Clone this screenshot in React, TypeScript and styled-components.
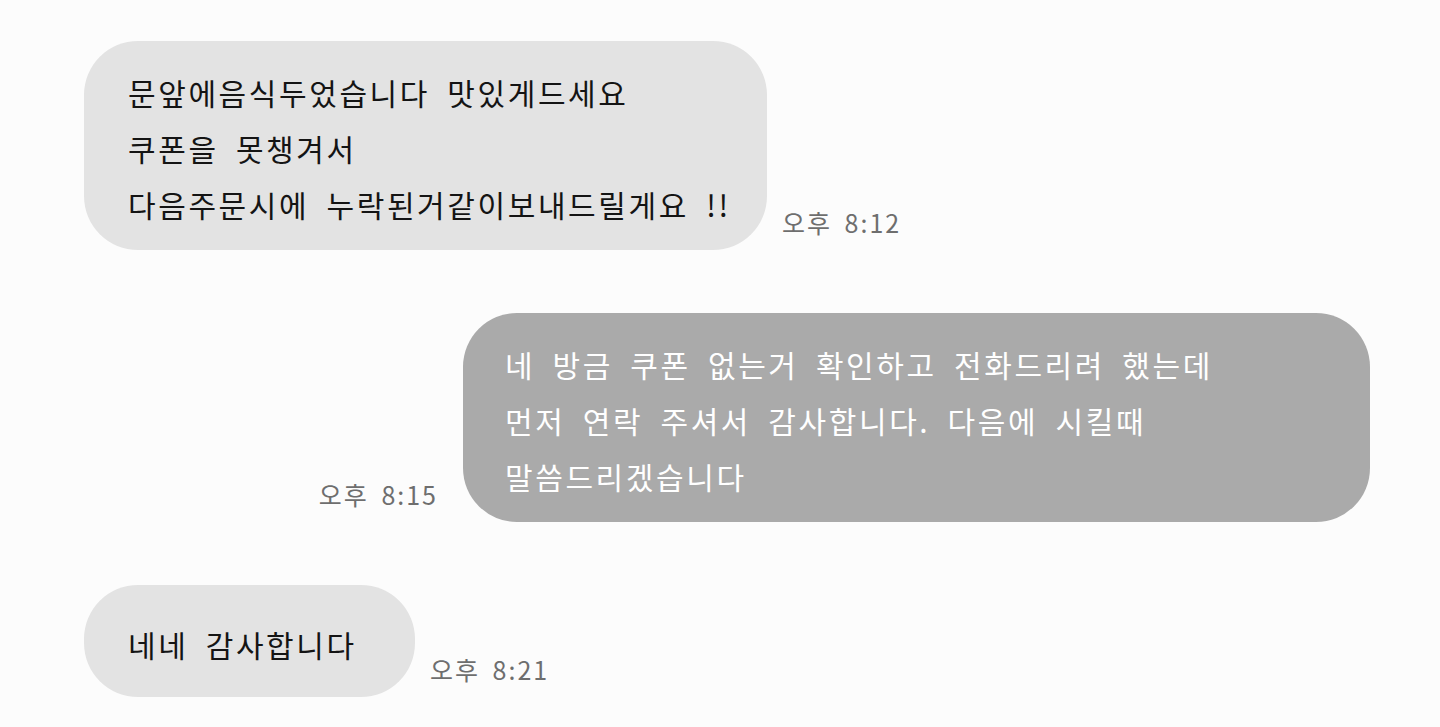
import styled, { createGlobalStyle } from "styled-components";

const GlobalStyle = createGlobalStyle`
  html, body {
    margin: 0;
    padding: 0;
    background: #fcfcfc;
  }
  body {
    font-family: "Noto Sans CJK KR", "Noto Sans", sans-serif;
  }
`;

const Chat = styled.div`
  display: flex;
  flex-direction: column;
  gap: 63px;
  padding: 41px 70px 30px 84px;
  box-sizing: border-box;
  width: 1440px;
  min-height: 727px;
`;

const Row = styled.div<{ $mine?: boolean }>`
  display: flex;
  align-items: flex-end;
  justify-content: ${(p) => (p.$mine ? "flex-end" : "flex-start")};
  gap: ${(p) => (p.$mine ? "25px" : "15px")};
`;

const Bubble = styled.div<{ $mine?: boolean; $width: number }>`
  box-sizing: border-box;
  width: ${(p) => p.$width}px;
  min-height: 112px;
  display: flex;
  align-items: center;
  padding: 23px 36px 18px ${(p) => (p.$mine ? "42px" : "44px")};
  border-radius: 54px;
  background: ${(p) => (p.$mine ? "#aaaaaa" : "#e3e3e3")};
  color: ${(p) => (p.$mine ? "#ffffff" : "#141414")};
  font-size: 30px;
  line-height: 56px;
  letter-spacing: 2.6px;
  word-spacing: 8px;
  white-space: pre-line;
`;

const Time = styled.span`
  margin-bottom: 13px;
  font-size: 25px;
  line-height: 30px;
  letter-spacing: 2px;
  word-spacing: 5px;
  color: #6e6e6e;
  white-space: nowrap;
`;

type Message = {
  text: string;
  time: string;
  mine?: boolean;
  width: number;
};

const messages: Message[] = [
  {
    text: "문앞에음식두었습니다 맛있게드세요\n쿠폰을 못챙겨서\n다음주문시에 누락된거같이보내드릴게요 !!",
    time: "오후 8:12",
    width: 683,
  },
  {
    text: "네 방금 쿠폰 없는거 확인하고 전화드리려 했는데\n먼저 연락 주셔서 감사합니다. 다음에 시킬때\n말씀드리겠습니다",
    time: "오후 8:15",
    mine: true,
    width: 907,
  },
  {
    text: "네네 감사합니다",
    time: "오후 8:21",
    width: 331,
  },
];

function App() {
  return (
    <>
      <GlobalStyle />
      <Chat>
        {messages.map((m, i) => (
          <Row key={i} $mine={m.mine}>
            {m.mine && <Time>{m.time}</Time>}
            <Bubble $mine={m.mine} $width={m.width}>
              {m.text}
            </Bubble>
            {!m.mine && <Time>{m.time}</Time>}
          </Row>
        ))}
      </Chat>
    </>
  );
}

export default App;
